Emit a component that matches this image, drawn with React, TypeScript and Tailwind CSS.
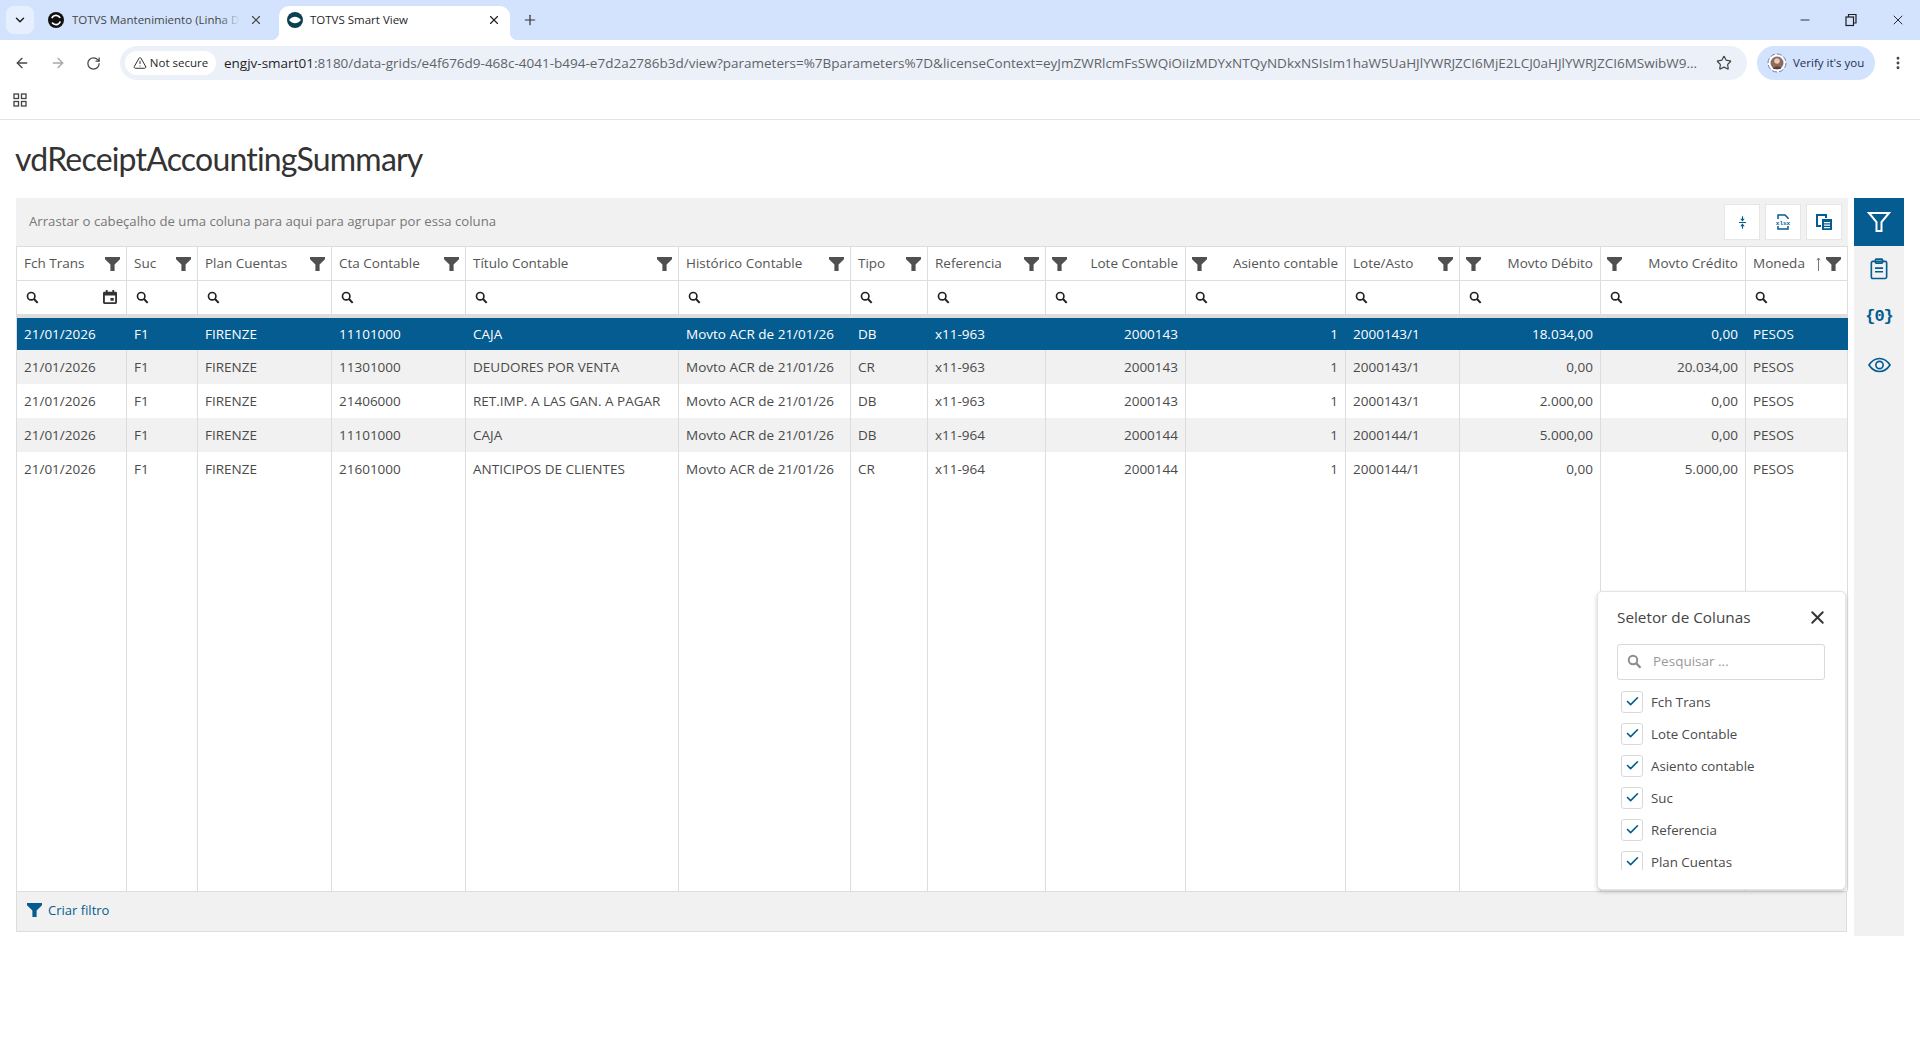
import { ArrowLeft, ArrowRight, RotateCw, Star, X, Plus, ChevronDown, Minus, EllipsisVertical, TriangleAlert, Check } from "lucide-react";

const Funnel = ({ className = "" }: { className?: string }) => (
  <svg viewBox="0 0 15 14" className={className} fill="currentColor">
    <path d="M0 0h15v2.2L9.6 7.6V14H5.4V7.6L0 2.2z" />
  </svg>
);

const Search = ({ className = "" }: { className?: string }) => (
  <svg viewBox="0 0 14 14" className={className} fill="none" stroke="currentColor" strokeWidth="1.8">
    <circle cx="5.6" cy="5.6" r="4" />
    <path d="M8.6 8.6L12.6 12.8" strokeWidth="2.2" />
  </svg>
);

const Calendar = () => (
  <svg viewBox="0 0 15 15" className="w-[14px] h-[14px] text-[#333]" fill="currentColor">
    <path fillRule="evenodd" d="M3 0h2v2h5V0h2v2h1.500A1.500 1.500 0 0 1 15 3.500v10a1.500 1.500 0 0 1-1.500 1.500h-12A1.500 1.500 0 0 1 0 13.500v-10A1.500 1.500 0 0 1 1.500 2H3zM2 6v7h11V6z" />
    <rect x="8" y="8.500" width="3.500" height="3" />
  </svg>
);

type Col = { label: string; w: string; right?: boolean; sort?: boolean };
const cols: Col[] = [
  { label: "Fch Trans", w: "w-[110px]" },
  { label: "Suc", w: "w-[71px]" },
  { label: "Plan Cuentas", w: "w-[134px]" },
  { label: "Cta Contable", w: "w-[134px]" },
  { label: "Título Contable", w: "w-[213px]" },
  { label: "Histórico Contable", w: "w-[172px]" },
  { label: "Tipo", w: "w-[77px]" },
  { label: "Referencia", w: "w-[118px]" },
  { label: "Lote Contable", w: "w-[140px]", right: true },
  { label: "Asiento contable", w: "w-[160px]", right: true },
  { label: "Lote/Asto", w: "w-[114px]" },
  { label: "Movto Débito", w: "w-[141px]", right: true },
  { label: "Movto Crédito", w: "w-[145px]", right: true },
  { label: "Moneda", w: "w-[102px]", sort: true },
];

const rows = [
  ["21/01/2026", "F1", "FIRENZE", "11101000", "CAJA", "Movto ACR de 21/01/26", "DB", "x11-963", "2000143", "1", "2000143/1", "18.034,00", "0,00", "PESOS"],
  ["21/01/2026", "F1", "FIRENZE", "11301000", "DEUDORES POR VENTA", "Movto ACR de 21/01/26", "CR", "x11-963", "2000143", "1", "2000143/1", "0,00", "20.034,00", "PESOS"],
  ["21/01/2026", "F1", "FIRENZE", "21406000", "RET.IMP. A LAS GAN. A PAGAR", "Movto ACR de 21/01/26", "DB", "x11-963", "2000143", "1", "2000143/1", "2.000,00", "0,00", "PESOS"],
  ["21/01/2026", "F1", "FIRENZE", "11101000", "CAJA", "Movto ACR de 21/01/26", "DB", "x11-964", "2000144", "1", "2000144/1", "5.000,00", "0,00", "PESOS"],
  ["21/01/2026", "F1", "FIRENZE", "21601000", "ANTICIPOS DE CLIENTES", "Movto ACR de 21/01/26", "CR", "x11-964", "2000144", "1", "2000144/1", "0,00", "5.000,00", "PESOS"],
];

const picks = ["Fch Trans", "Lote Contable", "Asiento contable", "Suc", "Referencia", "Plan Cuentas"];

const TotvsIcon = ({ light }: { light?: boolean }) =>
  light ? (
    <svg viewBox="0 0 16 16" className="w-4 h-4 shrink-0">
      <circle cx="8" cy="8" r="8" fill="#111" />
      <circle cx="8" cy="8" r="4.600" fill="none" stroke="#fff" strokeWidth="1.700" strokeDasharray="10 4.500" transform="rotate(20 8 8)" />
      <circle cx="8" cy="8" r="2" fill="#111" />
    </svg>
  ) : (
    <svg viewBox="0 0 16 16" className="w-4 h-4 shrink-0">
      <circle cx="8" cy="8" r="8" fill="#0b3f52" />
      <path d="M2 8c2-2.500 4-3.200 6-3.200S12 5.500 14 8c-2 2.500-4 3.200-6 3.200S4 10.500 2 8z" fill="#fff" />
    </svg>
  );

function TabStrip() {
  return (
    <div className="h-10 bg-[#d3e3fd] flex items-end relative text-[#444746]">
      <div className="absolute left-[6px] top-[6px] w-[28px] h-[28px] rounded-lg bg-[#e6effd] flex items-center justify-center">
        <ChevronDown size={14} strokeWidth={2.5} className="text-[#1f1f1f]" />
      </div>
      <div className="ml-[48px] w-[231px] h-[34px] pb-[6px] flex items-center shrink-0">
        <TotvsIcon light />
        <div className="relative ml-2 w-[168px] overflow-hidden">
          <span className="block whitespace-nowrap text-[11.500px] text-[#444746]">TOTVS Mantenimiento (Linha D</span>
          <span className="absolute right-0 top-0 bottom-0 w-5 bg-gradient-to-r from-transparent to-[#d3e3fd]" />
        </div>
        <X size={14} strokeWidth={2} className="ml-[9px] text-[#444]" />
      </div>
      <div className="relative w-[231px] h-[34px] pb-[6px] bg-white rounded-t-[10px] flex items-center pl-[8px] shrink-0">
        <span className="absolute -left-2 bottom-0 w-2 h-2 bg-[radial-gradient(circle_at_0_0,transparent_8px,white_8.500px)]" />
        <span className="absolute -right-2 bottom-0 w-2 h-2 bg-[radial-gradient(circle_at_100%_0,transparent_8px,white_8.500px)]" />
        <TotvsIcon />
        <span className="ml-[7px] text-[11.500px] text-[#1f1f1f] w-[177px] whitespace-nowrap">TOTVS Smart View</span>
        <X size={14} strokeWidth={2} className="text-[#222]" />
      </div>
      <div className="ml-[12px] h-[34px] pb-[6px] flex items-center">
        <Plus size={16} strokeWidth={1.8} className="text-[#333]" />
      </div>
      <div className="ml-auto h-10 pr-[14px] flex items-center gap-[32px] text-[#1f1f1f]">
        <Minus size={14} strokeWidth={1.5} />
        <svg viewBox="0 0 14 14" className="w-[14px] h-[14px]" fill="none" stroke="currentColor" strokeWidth="1.200">
          <rect x="2" y="4" width="7.500" height="8.500" />
          <path d="M4.500 4V1.500H12V10H9.500" />
        </svg>
        <X size={16} strokeWidth={1.4} />
      </div>
    </div>
  );
}

function Toolbar() {
  return (
    <div className="h-12 pt-[6px] flex items-start bg-white rounded-t-lg relative">
      <div className="w-[120px] h-[34px] shrink-0 flex items-center pl-[14px] gap-[20px]">
        <ArrowLeft size={16} strokeWidth={2} className="text-[#444746]" />
        <ArrowRight size={16} strokeWidth={2} className="text-[#a6a8ab]" />
        <RotateCw size={15} strokeWidth={2} className="text-[#444746]" />
      </div>
      <div className="w-[1627px] h-[34px] rounded-full bg-[#ecf1f9] flex items-center pl-[5px] shrink-0">
        <div className="w-[91px] h-6 rounded-full bg-white flex items-center justify-center gap-[3px] text-[11.500px] font-medium text-[#1f1f1f] shrink-0">
          <TriangleAlert size={14} strokeWidth={1.6} />
          <span>Not secure</span>
        </div>
        <div className="ml-[8px] w-[1476px] whitespace-nowrap overflow-hidden text-[13.500px] text-[#1f1f1f]">
          engjv-smart01<span className="text-[#5f6368]">:8180/data-grids/e4f676d9-468c-4041-b494-e7d2a2786b3d/view?parameters=%7Bparameters%7D&amp;licenseContext=eyJmZWRlcmFsSWQiOiIzMDYxNTQyNDkxNSIsIm1haW5UaHJlYWRJZCI6MjE2LCJ0aHJlYWRJZCI6MSwibW9...</span>
        </div>
        <Star size={16} strokeWidth={1.8} className="ml-[16px] text-[#444746] shrink-0" />
      </div>
      <div className="ml-[10px] w-[118px] h-[34px] rounded-full bg-[#d3e3fd] flex items-center pl-[10px] gap-[6px] shrink-0">
        <svg viewBox="0 0 20 20" className="w-5 h-5 shrink-0">
          <circle cx="10" cy="10" r="9" fill="#fff" stroke="#5f7fb5" strokeWidth="1" strokeDasharray="5 2" />
          <circle cx="10" cy="10" r="6.500" fill="#8b6b5c" />
          <circle cx="10" cy="8" r="2.800" fill="#e7c9b5" />
          <path d="M6 16c.5-3.500 7.500-3.500 8 0z" fill="#5d3a35" />
        </svg>
        <span className="text-[11.500px] text-[#1f2f4f] whitespace-nowrap">Verify it's you</span>
      </div>
      <div className="h-[34px] flex items-center">
        <EllipsisVertical size={16} strokeWidth={2.4} className="ml-[15px] text-[#444746]" />
      </div>
    </div>
  );
}

function BookmarkBar() {
  return (
    <div className="h-8 pb-2 border-b border-[#e3e3e3] flex items-center pl-[13px]">
      <svg viewBox="0 0 14 14" className="w-[14px] h-[14px] text-[#444]" fill="none" stroke="currentColor" strokeWidth="1.300">
        <rect x="1" y="1" width="4.500" height="4.500" />
        <rect x="8.500" y="1" width="4.500" height="4.500" />
        <rect x="1" y="8.500" width="4.500" height="4.500" />
        <rect x="8.500" y="8.500" width="4.500" height="4.500" />
      </svg>
    </div>
  );
}

function HeaderCell({ col }: { col: Col }) {
  return (
    <th className="h-[34px] border border-[#dddddd] px-[6px] font-medium text-[13.500px] text-[#555] text-left">
      <div className="flex items-center justify-between gap-1 whitespace-nowrap overflow-hidden">
        {col.right ? (
          <>
            <Funnel className="w-[15px] h-[14px] text-[#505050] shrink-0" />
            <span className="pr-[1px]">{col.label}</span>
          </>
        ) : (
          <>
            <span className="pl-[1px]">{col.label}</span>
            {col.sort ? (
              <span className="flex items-center gap-[5px] shrink-0">
                <svg viewBox="0 0 5 14" className="w-[5px] h-[14px] text-[#777]" fill="none" stroke="currentColor" strokeWidth="1">
                  <path d="M2.500 14V1M.8 3.200L2.500 1l1.700 2.200" />
                </svg>
                <Funnel className="w-[15px] h-[14px] text-[#505050]" />
              </span>
            ) : (
              <Funnel className="w-[15px] h-[14px] text-[#505050] shrink-0" />
            )}
          </>
        )}
      </div>
    </th>
  );
}

function Grid() {
  return (
    <div className="relative w-[1832px] shrink-0 self-start">
      <div className="h-12 bg-[#f1f1f1] flex items-center pl-[13px] pr-[5px]">
        <span className="text-[13.200px] text-[#777]">Arrastar o cabeçalho de uma coluna para aqui para agrupar por essa coluna</span>
        <div className="ml-auto flex gap-[5px] -translate-x-px">
          <button className="w-9 h-9 bg-white border border-[#e6e6e6] flex items-center justify-center text-[#045c90]">
            <svg viewBox="0 0 10 18" className="w-[7px] h-[15px]" fill="currentColor">
              <rect x="0" y="8.300" width="10" height="1.400" />
              <path d="M5 7.500L1.800 3.500h2.400V0h1.600v3.500h2.400zM5 10.500l3.200 4H5.800V18H4.200v-3.500H1.800z" />
            </svg>
          </button>
          <button className="w-9 h-9 bg-white border border-[#e6e6e6] flex items-center justify-center text-[#045c90]">
            <svg viewBox="0 0 16 16" className="w-4 h-4">
              <path d="M3 5V1h7l3 3v1M3 12v3h10v-3" fill="none" stroke="currentColor" strokeWidth="1.500" />
              <text x="8" y="10.500" textAnchor="middle" fontSize="6" fontWeight="700" fill="currentColor" fontFamily="Liberation Mono">xlsx</text>
            </svg>
          </button>
          <button className="w-9 h-9 bg-white border border-[#e6e6e6] flex items-center justify-center text-[#045c90]">
            <svg viewBox="0 0 16 16" className="w-4 h-4" fill="currentColor">
              <path fillRule="evenodd" d="M0 0h11v4h-2V2H2v9h3v2H0z" />
              <path fillRule="evenodd" d="M6 5h10v11H6zm2 3v1.200h6V8zm0 2.500v1.200h6v-1.200zM8 13v1.200h6V13z" />
            </svg>
          </button>
        </div>
      </div>

      <table className="table-fixed border-collapse w-[1831px] text-[13.500px] text-[#4a4a4a]">
        <colgroup>
          {cols.map((c) => (
            <col key={c.label} className={c.w} />
          ))}
        </colgroup>
        <thead>
          <tr>
            {cols.map((c) => (
              <HeaderCell key={c.label} col={c} />
            ))}
          </tr>
          <tr>
            {cols.map((c, i) => (
              <th key={c.label} className="h-[35px] border-x border-t border-b-[4px] border-x-[#dddddd] border-t-[#dddddd] border-b-[#dddddd] px-[9px] font-normal">
                <div className="flex items-center justify-between text-[#222]">
                  <Search className="w-[13px] h-[13px]" />
                  {i === 0 && <Calendar />}
                </div>
              </th>
            ))}
          </tr>
        </thead>
        <tbody>
          {rows.map((r, ri) => (
            <tr key={ri} className={ri === 0 ? "bg-[#045c90] text-white" : ri % 2 === 1 ? "bg-[#f1f1f1]" : "bg-white"}>
              {r.map((v, ci) => (
                <td
                  key={ci}
                  className={`h-[34px] px-[7px] pt-[1px] whitespace-nowrap overflow-hidden border-x ${ri === 0 ? (ci === 0 ? "border-l-[#dddddd] border-r-[#045c90]" : "border-x-[#045c90]") : "border-x-[#dddddd]"} ${cols[ci].right ? "text-right" : "text-left"}`}
                >
                  {v}
                </td>
              ))}
            </tr>
          ))}
          <tr>
            {cols.map((c) => (
              <td key={c.label} className="h-[405px] border-x border-x-[#dddddd]"></td>
            ))}
          </tr>
        </tbody>
      </table>

      <div className="w-[1831px] h-[41px] bg-[#f1f1f1] border border-[#dddddd] flex items-center pl-[10px] text-[#045c90] text-[13px]">
        <Funnel className="w-[15px] h-[14px] mb-[3px]" />
        <span className="ml-[6px]">Criar filtro</span>
      </div>

      <div className="absolute right-[2px] bottom-[42px] w-[249px] h-[299px] bg-white rounded-[5px] border border-[#e4e4e4] shadow-[0_2px_4px_rgba(0,0,0,0.2)] pt-[11px] pl-[19px] pr-[20px]">
        <div className="flex items-center justify-between h-[30px]">
          <span className="text-[15.300px] text-[#444]">Seletor de Colunas</span>
          <X size={21} strokeWidth={2.2} className="text-[#333] mr-[-3px]" />
        </div>
        <div className="mt-[11px] h-[36px] border border-[#d9d9d9] rounded-[3px] flex items-center pl-[9px] text-[#8c8c8c]">
          <Search className="w-[15px] h-[15px]" />
          <span className="ml-[11px] text-[13.500px] text-[#999]">Pesquisar ...</span>
        </div>
        <div className="mt-[11px] h-[179px] overflow-hidden">
          {picks.map((p) => (
            <div key={p} className="h-8 flex items-start pl-1">
              <span className="w-[22px] h-[22px] border border-[#d9d9d9] rounded-[3px] flex items-center justify-center text-[#045c90] shrink-0">
                <Check size={15} strokeWidth={2.6} />
              </span>
              <span className="ml-[8px] text-[13.300px] text-[#4a4a4a] leading-[22px]">{p}</span>
            </div>
          ))}
        </div>
      </div>
    </div>
  );
}

function Side() {
  return (
    <div className="ml-[6px] w-[50px] h-[738px] bg-[#f1f1f1] flex flex-col items-center text-[#045c90] shrink-0">
      <div className="w-[50px] h-12 bg-[#045c90] flex items-center justify-center">
        <svg viewBox="0 0 24 24" className="w-[24px] h-[24px]" fill="none" stroke="#fff" strokeWidth="2">
          <path d="M2 3h20l-7.500 9v9h-5v-9z" />
        </svg>
      </div>
      <div className="h-[46px] flex items-center justify-center">
        <svg viewBox="0 0 20 24" className="w-[18px] h-[22px]" fill="none" stroke="currentColor" strokeWidth="1.800">
          <rect x="1.500" y="3.500" width="17" height="19" rx="1.500" />
          <rect x="6" y="1" width="8" height="4.500" rx="1" />
          <path d="M5.500 11h9M5.500 15h9" />
        </svg>
      </div>
      <div className="h-[49px] pt-[1px] flex items-center justify-center font-bold text-[17px] font-['Liberation_Mono',monospace] tracking-[-1px]">
        {"{0}"}
      </div>
      <div className="h-[47px] flex items-center justify-center">
        <svg viewBox="0 0 24 16" className="w-[23px] h-[16px]" fill="none" stroke="currentColor" strokeWidth="1.700">
          <path d="M1 8c3-4.500 7-6.800 11-6.800S20 3.500 23 8c-3 4.500-7 6.800-11 6.800S4 12.500 1 8z" />
          <circle cx="12" cy="8" r="3.800" />
        </svg>
      </div>
    </div>
  );
}

export default function App() {
  return (
    <div className="w-[1920px] h-[1040px] overflow-hidden bg-white font-['Open_Sans',sans-serif]">
      <TabStrip />
      <Toolbar />
      <BookmarkBar />
      <h1 className="h-[78px] pl-[15px] flex items-center font-['Lato',sans-serif] text-[32px] text-[#333] tracking-[-0.8px]">vdReceiptAccountingSummary</h1>
      <div className="flex pl-[16px]">
        <Grid />
        <Side />
      </div>
    </div>
  );
}
